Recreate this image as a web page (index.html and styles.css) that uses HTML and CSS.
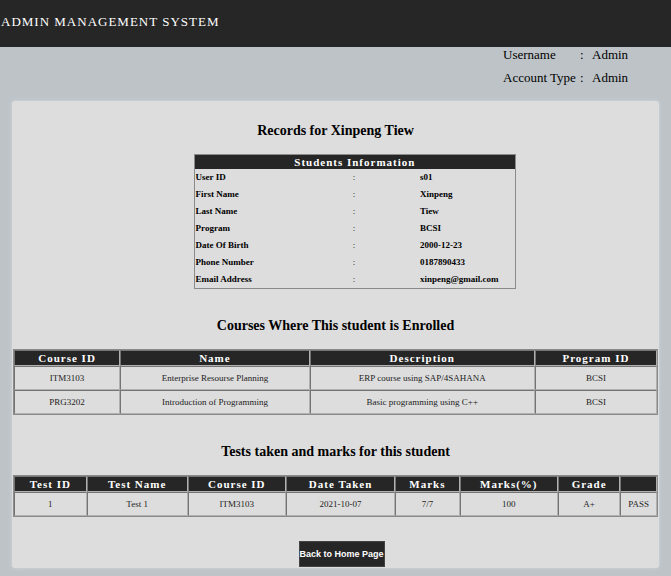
FILE: index.html
```html
<!DOCTYPE html>
<html lang="en">
<head>
<meta charset="utf-8">
<meta name="viewport" content="width=device-width, initial-scale=1">
<title>Admin Management System</title>
<link rel="stylesheet" href="styles.css">
</head>
<body>
<header class="topbar">ADMIN MANAGEMENT SYSTEM</header>
<dl class="account">
  <dt>Username</dt><dd class="colon">:</dd><dd>Admin</dd>
  <dt>Account Type</dt><dd class="colon">:</dd><dd>Admin</dd>
</dl>
<main class="card">
  <h2>Records for Xinpeng Tiew</h2>
  <table class="info">
    <colgroup><col class="info-label"><col class="info-colon"><col class="info-value"></colgroup>
    <thead><tr><th colspan="3">Students Information</th></tr></thead>
    <tbody>
      <tr><th scope="row">User ID</th><td class="colon">:</td><td>s01</td></tr>
      <tr><th scope="row">First Name</th><td class="colon">:</td><td>Xinpeng</td></tr>
      <tr><th scope="row">Last Name</th><td class="colon">:</td><td>Tiew</td></tr>
      <tr><th scope="row">Program</th><td class="colon">:</td><td>BCSI</td></tr>
      <tr><th scope="row">Date Of Birth</th><td class="colon">:</td><td>2000-12-23</td></tr>
      <tr><th scope="row">Phone Number</th><td class="colon">:</td><td>0187890433</td></tr>
      <tr><th scope="row">Email Address</th><td class="colon">:</td><td>xinpeng@gmail.com</td></tr>
    </tbody>
  </table>
  <h2>Courses Where This student is Enrolled</h2>
  <table class="grid">
    <colgroup><col class="c-id"><col class="c-name"><col class="c-desc"><col class="c-program"></colgroup>
    <thead><tr><th>Course ID</th><th>Name</th><th>Description</th><th>Program ID</th></tr></thead>
    <tbody>
      <tr><td>ITM3103</td><td>Enterprise Resourse Planning</td><td>ERP course using SAP/4SAHANA</td><td>BCSI</td></tr>
      <tr><td>PRG3202</td><td>Introduction of Programming</td><td>Basic programming using C++</td><td>BCSI</td></tr>
    </tbody>
  </table>
  <h2>Tests taken and marks for this student</h2>
  <table class="grid">
    <colgroup><col class="t-id"><col class="t-name"><col class="t-course"><col class="t-date"><col class="t-marks"><col class="t-percent"><col class="t-grade"><col class="t-result"></colgroup>
    <thead><tr><th>Test ID</th><th>Test Name</th><th>Course ID</th><th>Date Taken</th><th>Marks</th><th>Marks(%)</th><th>Grade</th><th></th></tr></thead>
    <tbody>
      <tr><td>1</td><td>Test 1</td><td>ITM3103</td><td>2021-10-07</td><td>7/7</td><td>100</td><td>A+</td><td>PASS</td></tr>
    </tbody>
  </table>
  <button type="button" class="home">Back to Home Page</button>
</main>
</body>
</html>
```
FILE: styles.css
```css
* {
  box-sizing: border-box;
}

body {
  margin: 0;
  background: #bdc3c7;
  color: #000;
  font-family: "Liberation Serif", "Times New Roman", serif;
}

.topbar {
  padding: 14px 1px 17px;
  background: #262626;
  color: #fff;
  font-size: 13px;
  line-height: 16px;
  letter-spacing: 1px;
}

.account {
  display: grid;
  grid-template-columns: 77px 12px 1fr;
  width: 168px;
  margin: 0 0 0 auto;
  font-size: 13px;
  line-height: 15px;
  row-gap: 8px;
}

.account dd {
  margin: 0;
}

.card {
  margin: 16px 12px 8px;
  padding: 0 1px 1px;
  border-radius: 3px;
  background: #ddd;
  box-shadow: 0 0 4px #d0d8dc;
}

.card h2 {
  margin: 0;
  padding: 29px 0 15px;
  font-size: 14px;
  line-height: 16px;
  text-align: center;
}

.card h2:first-child {
  padding-top: 22px;
}

table {
  border: 1px solid #8a8a8a;
  border-collapse: separate;
  border-spacing: 0;
  table-layout: fixed;
  font-size: 9px;
  line-height: 11px;
}

th,
td {
  padding: 0;
}

thead th {
  height: 14px;
  background: #262626;
  color: #fff;
  font-size: 11px;
  line-height: 13px;
  letter-spacing: 1px;
}

.info {
  width: 50%;
  margin-left: 28%;
}

.info tbody th,
.info tbody td {
  height: 17px;
  padding: 0 1px;
  font-weight: bold;
  text-align: left;
}

.info tbody .colon {
  font-weight: normal;
}

.grid {
  width: 100%;
}

.grid th,
.grid td {
  border: 1px solid;
  border-color: #747474 #b0b0b0 #b0b0b0 #747474;
}

.grid th {
  height: 16px;
}

.grid td {
  height: 24px;
  color: #222;
  text-align: center;
}

.info-label { width: 49%; }
.info-colon { width: 21%; }
.info-value { width: 30%; }

.c-id { width: 16.5%; }
.c-name { width: 29.5%; }
.c-desc { width: 35%; }
.c-program { width: 19%; }

.t-id { width: 11.3%; }
.t-name { width: 15.7%; }
.t-course { width: 15.3%; }
.t-date { width: 17%; }
.t-marks { width: 10%; }
.t-percent { width: 15.3%; }
.t-grade { width: 9.7%; }
.t-result { width: 5.7%; }

.home {
  display: block;
  height: 26px;
  margin: 24px auto 0 calc(50% - 37px);
  padding: 0;
  border: 1px solid #444;
  background: #262626;
  color: #fff;
  font: bold 9px "Liberation Sans", Arial, sans-serif;
}
```
